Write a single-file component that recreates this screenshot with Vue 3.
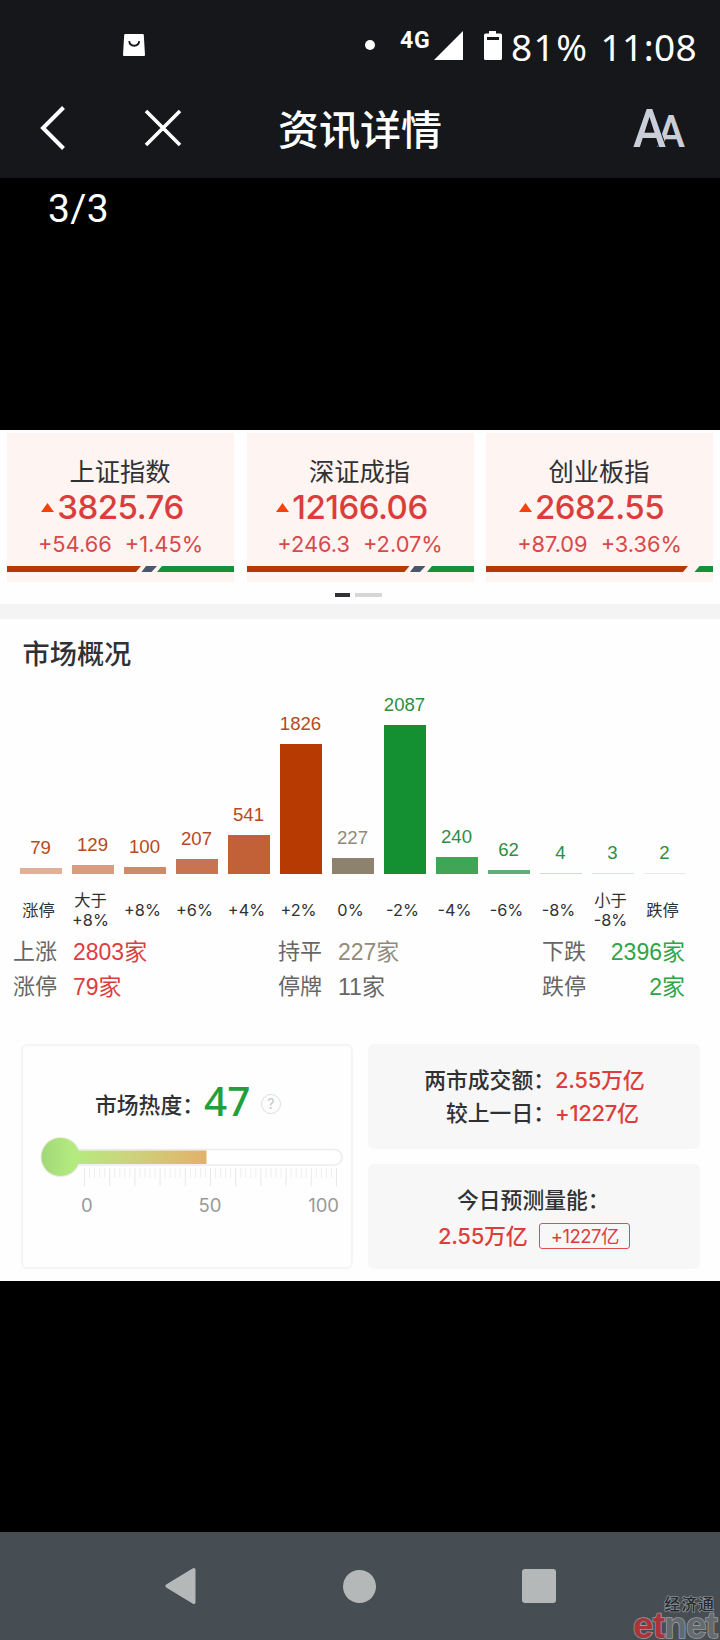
<template>
  <div class="screen">
    <header class="top">
      <div class="status">
        <svg class="bag" viewBox="0 0 22 22">
          <path d="M2.2 0h17.6q1 0 1 1l1.2 20q0 1-1 1H1q-1 0-1-1L1.200 1q0-1 1-1z" fill="#fff" />
          <path d="M6.200 7.200q.6 4.600 5 4.600t5-4.600" fill="none" stroke="#15171b" stroke-width="1.900" />
        </svg>
        <span class="status-dot"></span>
        <span class="network">4G</span>
        <svg class="signal" viewBox="0 0 29 29"><path d="M0 29L29 0v29z" fill="#fff" /></svg>
        <svg class="battery" viewBox="0 0 18 29">
          <path d="M5 0h7v2.500h4.500q1.500 0 1.500 1.500v23.500q0 1.500-1.500 1.500h-15q-1.500 0-1.500-1.500v-23.500q0-1.500 1.500-1.500h3.500z" fill="#fff" />
          <path d="M3 6h12v3H3z" fill="#15171b" />
        </svg>
        <span class="percent">81%</span>
        <span class="clock">11:08</span>
      </div>
      <div class="titlebar">
        <svg class="back" viewBox="0 0 26 44"><path d="M23.500 1.500L3 22l20.500 20.500" fill="none" stroke="#fff" stroke-width="4" /></svg>
        <svg class="close" viewBox="0 0 38 38"><path d="M2 2l34 34M36 2L2 36" fill="none" stroke="#fff" stroke-width="3.600" /></svg>
        <h1 class="title">资讯详情</h1>
        <svg class="font-size" viewBox="0 0 64 64">
          <text x="26" y="51" font-size="45" textLength="28" lengthAdjust="spacingAndGlyphs">A</text>
          <text class="big-a" x="2" y="51" font-size="53" textLength="33" lengthAdjust="spacingAndGlyphs">A</text>
        </svg>
      </div>
    </header>

    <div class="pager">3/3</div>

    <main class="content">
      <section class="indices">
        <div v-for="item in indices" :key="item.name" class="index-card">
          <p class="index-name">{{ item.name }}</p>
          <p class="index-value">
            <svg class="up" viewBox="0 0 13 9"><path d="M6.500 0L13 9H0z" fill="#f5420b" /></svg>
            <span>{{ item.value }}</span>
          </p>
          <p class="index-change"><span>{{ item.change }}</span><span>{{ item.percent }}</span></p>
          <svg class="ratio" viewBox="0 0 227 6" preserveAspectRatio="none">
            <path :d="`M0 0H${item.red + 5}L${item.red} 6H0z`" fill="#b63a06" />
            <path v-if="item.flat" :d="`M${item.red + 10} 0h11l-5.500 6h-10z`" fill="#4a566b" />
            <path :d="`M${item.green + 5} 0H227V6H${item.green}z`" fill="#16913a" />
          </svg>
        </div>
      </section>
      <div class="pages"><span class="page active"></span><span class="page"></span></div>
      <div class="band"></div>

      <h2 class="section-title">市场概况</h2>

      <section class="chart">
        <div v-for="bar in bars" :key="bar.label" class="col">
          <span class="col-value" :style="{ color: bar.text }">{{ bar.value }}</span>
          <span class="col-bar" :style="{ height: barHeight(bar.value), background: bar.color }"></span>
        </div>
      </section>
      <div class="axis">
        <span v-for="bar in bars" :key="bar.label" class="axis-label">{{ bar.label }}</span>
      </div>

      <section class="stats">
        <template v-for="stat in stats" :key="stat.label">
          <span class="stat-label">{{ stat.label }}</span>
          <span class="stat-value" :class="stat.tone">{{ stat.value }}</span>
        </template>
      </section>

      <section class="panels">
        <div class="heat">
          <div class="heat-title">
            <span>市场热度：</span>
            <b class="heat-value">47</b>
            <span class="help">?</span>
          </div>
          <svg class="thermo" viewBox="0 0 310 72">
            <defs>
              <linearGradient id="heat" gradientUnits="userSpaceOnUse" x1="2" y1="0" x2="168" y2="0">
                <stop offset="0" stop-color="#a0d877" />
                <stop offset="0.2" stop-color="#b4eb80" />
                <stop offset="0.550" stop-color="#cdd27c" />
                <stop offset="1" stop-color="#e1b26b" />
              </linearGradient>
            </defs>
            <rect x="22" y="14.500" width="282" height="15.500" rx="7.700" fill="#fff" stroke="#ececec" stroke-width="1.600" />
            <circle cx="22.500" cy="22" r="20" fill="#e9e9e4" />
            <path d="M22 15.500h146.500v13.500H22z" fill="url(#heat)" />
            <circle cx="22.500" cy="22" r="19" fill="url(#heat)" />
            <path
              v-for="n in 51"
              :key="n"
              :d="`M${46.500 + (n - 1) * 5.040} 33v${(n - 1) % 5 === 0 ? 18 : 10}`"
              :stroke="(n - 1) % 5 === 0 ? '#e6e9ea' : '#efefef'"
              stroke-width="1"
            />
          </svg>
          <div class="scale"><span>0</span><span>50</span><span>100</span></div>
        </div>
        <div class="side">
          <div class="box turnover">
            <span class="name">两市成交额：</span><span class="amount">2.55万亿</span>
            <span class="name">较上一日：</span><span class="amount">+1227亿</span>
          </div>
          <div class="box forecast">
            <p class="name">今日预测量能：</p>
            <p class="forecast-row"><span class="amount">2.55万亿</span><span class="tag">+1227亿</span></p>
          </div>
        </div>
      </section>
    </main>

    <footer class="nav">
      <svg class="nav-back" viewBox="0 0 32 38"><path d="M2.500 17L28 1.500q3-1.500 3 1.500v32q0 3-3 1.500L2.500 21q-3.500-2 0-4z" fill="#b4b8b9" /></svg>
      <span class="nav-home"></span>
      <span class="nav-recent"></span>
      <div class="watermark">
        <span class="wm-cn">经济通</span>
        <span class="wm-en"><em>et</em>net</span>
      </div>
    </footer>
  </div>
</template>

<script setup>
const indices = [
  { name: '上证指数', value: '3825.76', change: '+54.66', percent: '+1.45%', red: 129, green: 150, flat: true },
  { name: '深证成指', value: '12166.06', change: '+246.3', percent: '+2.07%', red: 157.5, green: 180, flat: true },
  { name: '创业板指', value: '2682.55', change: '+87.09', percent: '+3.36%', red: 197, green: 208.5, flat: false }
]

const bars = [
  { label: '涨停', value: 79, color: '#e2af98', text: '#b44a23' },
  { label: '大于 +8%', value: 129, color: '#d99b82', text: '#b44a23' },
  { label: '+8%', value: 100, color: '#d08a69', text: '#b44a23' },
  { label: '+6%', value: 207, color: '#c87450', text: '#b44a23' },
  { label: '+4%', value: 541, color: '#c26037', text: '#b44a23' },
  { label: '+2%', value: 1826, color: '#b63a02', text: '#b44a23' },
  { label: '0%', value: 227, color: '#8d826d', text: '#8f8979' },
  { label: '-2%', value: 2087, color: '#148f32', text: '#2f8e42' },
  { label: '-4%', value: 240, color: '#40a557', text: '#2f8e42' },
  { label: '-6%', value: 62, color: '#5fad78', text: '#2f8e42' },
  { label: '-8%', value: 4, color: '#cfdcd0', text: '#2f8e42' },
  { label: '小于 -8%', value: 3, color: '#d5e6da', text: '#2f8e42' },
  { label: '跌停', value: 2, color: '#e6ebe7', text: '#2f8e42' }
]

const barHeight = (value) => `${Math.max(1, value * 0.0712)}px`

const stats = [
  { label: '上涨', value: '2803家', tone: 'red' },
  { label: '持平', value: '227家', tone: 'flat' },
  { label: '下跌', value: '2396家', tone: 'green' },
  { label: '涨停', value: '79家', tone: 'red' },
  { label: '停牌', value: '11家', tone: '' },
  { label: '跌停', value: '2家', tone: 'green' }
]
</script>

<style>
body {
  margin: 0;
  background: #000;
}
</style>

<style scoped>
.screen {
  width: 720px;
  height: 1640px;
  display: flex;
  flex-direction: column;
  background: #000;
  overflow: hidden;
  font-family: Inter, 'Noto Sans CJK SC', sans-serif;
}

p,
h1,
h2 {
  margin: 0;
  font-weight: 400;
}

svg {
  display: block;
  flex-shrink: 0;
}

.top {
  height: 178px;
  background: #15171b;
  color: #fff;
  flex-shrink: 0;
}

.status {
  display: flex;
  align-items: center;
  height: 90px;
  padding-left: 123px;
  white-space: nowrap;
}

.bag {
  width: 22px;
  height: 22px;
}

.status-dot {
  width: 10px;
  height: 10px;
  margin-left: 220px;
  border-radius: 50%;
  background: #fff;
}

.network {
  width: 34px;
  margin-left: 25px;
  padding-bottom: 9px;
  font: 700 23px/24px Roboto, sans-serif;
  letter-spacing: 0.8px;
}

.signal {
  width: 29px;
  height: 29px;
}

.battery {
  width: 18px;
  height: 29px;
  margin-left: 21px;
}

.percent,
.clock {
  padding-top: 3px;
  font: 400 37px/40px 'Noto Sans', sans-serif;
}

.percent {
  width: 89.5px;
  margin-left: 9px;
  letter-spacing: 1.4px;
}

.clock {
  letter-spacing: 0.4px;
}

.titlebar {
  display: flex;
  align-items: center;
  height: 76px;
  padding-left: 40px;
}

.back {
  width: 26px;
  height: 44px;
}

.close {
  width: 38px;
  height: 38px;
  margin-left: 78px;
}

.title {
  width: 166px;
  margin-left: 96px;
  padding-bottom: 2px;
  font: 500 41px/60px 'Noto Sans CJK SC', sans-serif;
  white-space: nowrap;
}

.font-size {
  width: 64px;
  height: 64px;
  margin-left: 187px;
  font-family: Roboto, sans-serif;
  font-weight: 500;
  fill: #c9ced9;
}

.big-a {
  stroke: #15171b;
  stroke-width: 2px;
  paint-order: stroke;
}

.pager {
  height: 252px;
  padding: 8px 0 0 48px;
  box-sizing: border-box;
  color: #fff;
  font: 400 39px/46px Roboto, sans-serif;
  letter-spacing: 0.4px;
  flex-shrink: 0;
}

.content {
  height: 851px;
  background: #fefefe;
  color: #303133;
  flex-shrink: 0;
}

.indices {
  display: grid;
  grid-template-columns: repeat(3, 227px);
  gap: 12.5px;
  padding: 3px 7px 0;
}

.index-card {
  height: 149px;
  padding-top: 21px;
  box-sizing: border-box;
  background: #fef4f1;
  text-align: center;
}

.index-name {
  padding-right: 1px;
  font-size: 25.3px;
  line-height: 35px;
}

.index-value {
  display: flex;
  align-items: center;
  justify-content: center;
  gap: 3px;
  height: 36px;
  padding-right: 16px;
  color: #dc3c3b;
  font-size: 33px;
  font-weight: 500;
  letter-spacing: -0.5px;
}

.up {
  width: 13px;
  height: 9px;
}

.index-change {
  display: flex;
  justify-content: center;
  gap: 13px;
  height: 40.5px;
  line-height: 38px;
  color: #d8494a;
  font-size: 21.8px;
}

.ratio {
  width: 227px;
  height: 6px;
}

.pages {
  display: flex;
  gap: 5px;
  padding: 11px 0 7px 335px;
}

.page {
  width: 27px;
  height: 4px;
  background: #d6d6d6;
}

.page.active {
  width: 15px;
  background: #303236;
}

.band {
  height: 15px;
  background: #f4f4f4;
}

.section-title {
  padding: 13px 0 2px 22.5px;
  font: 500 27.2px/40px 'Noto Sans CJK SC', sans-serif;
}

.chart {
  display: flex;
  align-items: flex-end;
  gap: 10px;
  height: 200px;
  padding-left: 20px;
}

.col {
  display: flex;
  flex-direction: column;
  align-items: center;
  width: 42px;
}

.col-value {
  margin-bottom: 10px;
  padding-right: 1px;
  font: 400 18.6px/20px 'Liberation Sans', sans-serif;
}

.col-bar {
  width: 42px;
}

.axis {
  display: flex;
  gap: 10px;
  height: 55px;
  padding: 9px 0 0 17.5px;
  box-sizing: border-box;
  margin-bottom: 8px;
}

.axis-label {
  display: flex;
  align-items: center;
  justify-content: center;
  width: 42px;
  height: 55px;
  font-size: 16.3px;
  line-height: 19.5px;
  text-align: center;
}

.stats {
  display: grid;
  grid-template-columns: 60px 205px 60px 204px 60px 83px;
  grid-auto-rows: 35px;
  padding-left: 13px;
  font: 400 22px/30px 'Liberation Sans', 'Noto Sans CJK SC', sans-serif;
  color: #666;
}

.stat-value {
  font-size: 23px;
}

.stat-value:nth-of-type(6n) {
  text-align: right;
}

.red {
  color: #dd3d3e;
}

.flat {
  color: #938b79;
}

.green {
  color: #2fa548;
}

.panels {
  display: flex;
  gap: 15px;
  padding: 37px 20px 0 21px;
}

.heat {
  width: 332px;
  height: 225px;
  box-sizing: border-box;
  border: 2px solid #f5f5f5;
  border-radius: 6px;
}

.heat-title {
  display: flex;
  align-items: center;
  height: 44px;
  padding: 36px 0 0 72px;
  font: 500 21.8px/34px 'Noto Sans CJK SC', sans-serif;
  white-space: nowrap;
}

.heat-value {
  width: 57px;
  padding-bottom: 6px;
  color: #229f3a;
  font: 500 40.5px/44px 'Noto Sans', sans-serif;
}

.help {
  width: 18px;
  height: 18px;
  border: 1.5px solid #dedede;
  border-radius: 50%;
  color: #ccc;
  font: 500 14px/18px Inter, sans-serif;
  text-align: center;
}

.thermo {
  width: 310px;
  height: 72px;
  margin: 9px 0 0 15px;
}

.scale {
  display: grid;
  grid-template-columns: 40px 178px 40px;
  margin-top: -14px;
  padding-left: 58px;
  color: #999;
  font-size: 18.5px;
  line-height: 24px;
  text-align: center;
}

.scale span:first-child {
  text-align: left;
}

.scale span:last-child {
  text-align: right;
}

.side {
  display: flex;
  flex-direction: column;
  gap: 15px;
}

.box {
  width: 332px;
  height: 105px;
  box-sizing: border-box;
  border-radius: 6px;
  background: #f7f7f7;
}

.name {
  font: 500 21.8px/33px 'Noto Sans CJK SC', sans-serif;
}

.turnover {
  display: grid;
  grid-template-columns: 187px auto;
  grid-auto-rows: 33px;
  padding-top: 19px;
}

.turnover .name {
  line-height: 32px;
  text-align: right;
}

.amount {
  color: #dd3d3b;
  font-size: 22px;
  font-weight: 500;
  line-height: 34px;
  letter-spacing: -0.3px;
}

.forecast {
  padding-top: 18px;
}

.forecast .name {
  padding-left: 89px;
}

.forecast-row {
  display: flex;
  align-items: center;
  gap: 12px;
  height: 41px;
  padding-left: 70px;
}

.tag {
  width: 89px;
  height: 24px;
  border: 1px solid #e04e4e;
  border-radius: 3px;
  color: #dd3d3b;
  font-size: 18.5px;
  line-height: 25px;
  letter-spacing: -0.5px;
  text-align: center;
}

.nav {
  position: relative;
  display: flex;
  align-items: center;
  height: 108px;
  margin-top: auto;
  padding-left: 164px;
  box-sizing: border-box;
  background: #464d53;
}

.nav-back {
  width: 33px;
  height: 38px;
}

.nav-home {
  width: 33px;
  height: 33px;
  margin-left: 146px;
  border-radius: 50%;
  background: #b4b8b9;
}

.nav-recent {
  width: 34px;
  height: 34px;
  margin-left: 145.5px;
  border-radius: 3px;
  background: #b4b8b9;
}

.watermark {
  position: absolute;
  right: 3px;
  bottom: 0;
  display: flex;
  flex-direction: column;
  align-items: flex-end;
}

.wm-cn {
  padding-right: 2px;
  color: #24292d;
  font: 500 15.5px/17px 'Noto Sans CJK SC', sans-serif;
  letter-spacing: 1.3px;
  -webkit-text-stroke: 1.5px #8b9093;
  paint-order: stroke fill;
}

.wm-en {
  color: #646b6f;
  font: 700 37px/28px 'Liberation Sans', sans-serif;
  letter-spacing: -0.9px;
  -webkit-text-stroke: 1.6px #9a9da0;
  paint-order: stroke fill;
}

.wm-en em {
  color: #ab343a;
  font-style: normal;
}
</style>
